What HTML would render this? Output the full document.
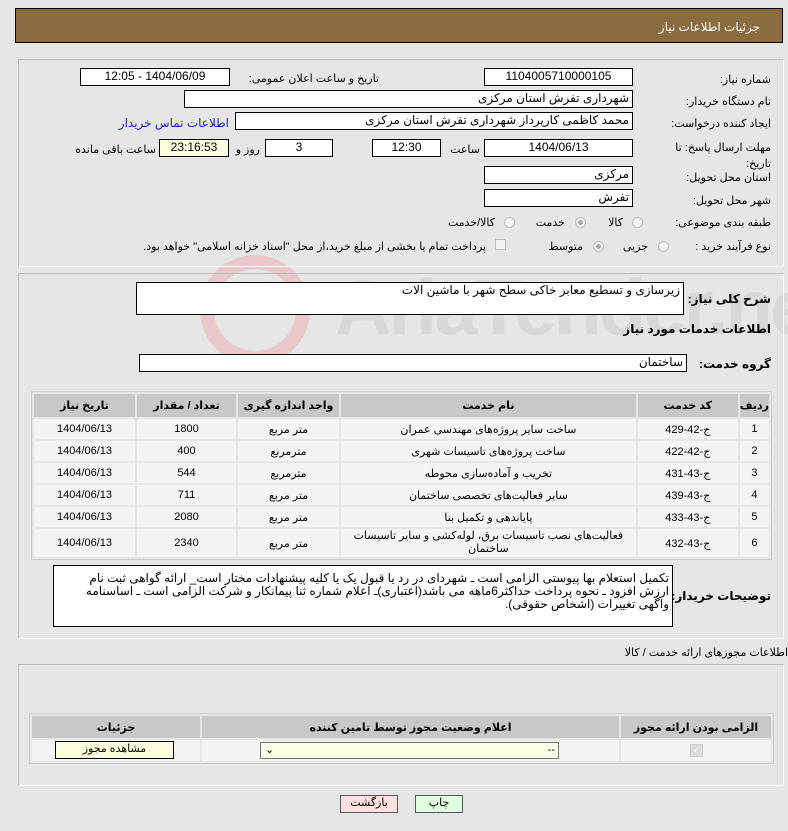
<!DOCTYPE html>
<html><head><meta charset="utf-8"><style>
body{margin:0;width:788px;height:831px;background:#e6e6e6;font-family:"Liberation Sans","DejaVu Sans",sans-serif;font-size:11px;color:#000;position:relative;overflow:hidden;direction:rtl}
.a{position:absolute;white-space:nowrap}
.box{position:absolute;background:#fff;border:1px solid #000;box-sizing:border-box;font-size:12px;line-height:15px;padding:0 3px;overflow:hidden}
.c{text-align:center}
.panel{position:absolute;border:1px solid #bbb;border-right-color:#fff;border-bottom-color:#fff;box-sizing:border-box}
.rad{position:absolute;width:11px;height:11px;border-radius:50%;border:1px solid #bbb;background:#f4f4f4;box-sizing:border-box}
.rad.on::after{content:"";position:absolute;left:2px;top:2px;width:5px;height:5px;border-radius:50%;background:#aaa}
table{border-collapse:separate;border-spacing:2px;position:absolute}
td,th{text-align:center;font-size:11px;padding:0}
th{background:#c8c8c8;font-weight:bold}
td{background:#f4f4f4}
.lb{font-size:12px;font-weight:bold}
</style></head><body>
<div class="a" style="left:15px;top:8px;width:768px;height:35px;background:#8b6b40;border:1px solid #000;box-sizing:border-box"></div>
<div class="a" style="right:28px;top:20px;color:#fff;font-size:12px">جزئیات اطلاعات نیاز</div>

<div class="a" style="left:0;top:250px;width:788px;height:120px;overflow:hidden">
<div class="a" style="left:335px;top:12px;font-size:78px;font-weight:bold;color:#d8d8d8;direction:ltr;letter-spacing:-3px;line-height:90px">AriaTender.neT</div>
<div class="a" style="left:200px;top:5px;width:110px;height:110px;border:14px solid #e8c8c8;border-radius:50%;box-sizing:border-box"></div>
</div>

<div class="panel" style="left:18px;top:59px;width:766px;height:208px"></div>
<div class="a" style="right:17px;top:73px">شماره نیاز:</div>
<div class="box c" style="left:484px;top:68px;width:149px;height:18px">1104005710000105</div>
<div class="a" style="right:409px;top:72px">تاریخ و ساعت اعلان عمومی:</div>
<div class="box c" style="left:80px;top:68px;width:150px;height:18px">1404/06/09 - 12:05</div>
<div class="a" style="right:17px;top:95px">نام دستگاه خریدار:</div>
<div class="box" style="left:184px;top:90px;width:449px;height:18px">شهرداری تفرش استان مرکزی</div>
<div class="a" style="right:17px;top:117px">ایجاد کننده درخواست:</div>
<div class="box" style="left:235px;top:112px;width:398px;height:18px">محمد کاظمی کارپرداز شهرداری تفرش استان مرکزی</div>
<div class="a" style="right:559px;top:116px;color:#2020d0;font-size:12px">اطلاعات تماس خریدار</div>
<div class="a" style="right:17px;top:140px;line-height:16px;white-space:normal;width:110px">مهلت ارسال پاسخ: تا تاریخ:</div>
<div class="box c" style="left:484px;top:139px;width:149px;height:18px">1404/06/13</div>
<div class="a" style="right:308px;top:143px">ساعت</div>
<div class="box c" style="left:372px;top:139px;width:69px;height:18px">12:30</div>
<div class="box c" style="left:265px;top:139px;width:68px;height:18px">3</div>
<div class="a" style="right:528px;top:143px">روز و</div>
<div class="box c" style="left:159px;top:139px;width:70px;height:18px;background:#ffffe0">23:16:53</div>
<div class="a" style="right:632px;top:143px">ساعت باقی مانده</div>
<div class="a" style="right:17px;top:171px">استان محل تحویل:</div>
<div class="box" style="left:484px;top:166px;width:149px;height:18px">مرکزی</div>
<div class="a" style="right:17px;top:194px">شهر محل تحویل:</div>
<div class="box" style="left:484px;top:189px;width:149px;height:18px">تفرش</div>
<div class="a" style="right:17px;top:216px">طبقه بندی موضوعی:</div>
<div class="rad" style="left:632px;top:217px"></div><div class="a" style="right:165px;top:216px">کالا</div>
<div class="rad on" style="left:575px;top:217px"></div><div class="a" style="right:223px;top:216px">خدمت</div>
<div class="rad" style="left:504px;top:217px"></div><div class="a" style="right:293px;top:216px">کالا/خدمت</div>
<div class="a" style="right:17px;top:240px">نوع فرآیند خرید :</div>
<div class="rad" style="left:658px;top:241px"></div><div class="a" style="right:140px;top:240px">جزیی</div>
<div class="rad on" style="left:593px;top:241px"></div><div class="a" style="right:205px;top:240px">متوسط</div>
<div class="a" style="left:495px;top:239px;width:11px;height:11px;border:1px solid #bbb;background:#f4f4f4;box-sizing:border-box"></div>
<div class="a" style="right:302px;top:240px">پرداخت تمام یا بخشی از مبلغ خرید،از محل "اسناد خزانه اسلامی" خواهد بود.</div>

<div class="panel" style="left:18px;top:273px;width:766px;height:366px"></div>
<div class="a lb" style="right:17px;top:292px">شرح کلی نیاز:</div>
<div class="box" style="left:136px;top:282px;width:548px;height:33px">زیرسازی و تسطیع معابر خاکی سطح شهر با ماشین الات</div>
<div class="a lb" style="right:17px;top:322px">اطلاعات خدمات مورد نیاز</div>
<div class="a lb" style="right:17px;top:357px">گروه خدمت:</div>
<div class="box" style="left:139px;top:354px;width:548px;height:18px">ساختمان</div>

<table style="left:31px;top:391px;width:741px;background:#e6e6e6;border:1px solid #ccc">
<tr style="height:23px"><th style="width:26px">ردیف</th><th style="width:100px">کد خدمت</th><th>نام خدمت</th><th style="width:101px">واحد اندازه گیری</th><th style="width:99px">تعداد / مقدار</th><th style="width:101px">تاریخ نیاز</th></tr>
<tr style="height:20px"><td>1</td><td>ج-42-429</td><td>ساخت سایر پروژه‌های مهندسی عمران</td><td>متر مربع</td><td>1800</td><td>1404/06/13</td></tr>
<tr style="height:20px"><td>2</td><td>ج-42-422</td><td>ساخت پروژه‌های تاسیسات شهری</td><td>مترمربع</td><td>400</td><td>1404/06/13</td></tr>
<tr style="height:20px"><td>3</td><td>ج-43-431</td><td>تخریب و آماده‌سازی محوطه</td><td>مترمربع</td><td>544</td><td>1404/06/13</td></tr>
<tr style="height:20px"><td>4</td><td>ج-43-439</td><td>سایر فعالیت‌های تخصصی ساختمان</td><td>متر مربع</td><td>711</td><td>1404/06/13</td></tr>
<tr style="height:20px"><td>5</td><td>ج-43-433</td><td>پایاندهی و تکمیل بنا</td><td>متر مربع</td><td>2080</td><td>1404/06/13</td></tr>
<tr style="height:28px"><td>6</td><td>ج-43-432</td><td style="line-height:13px">فعالیت‌های نصب تاسیسات برق، لوله‌کشی و سایر تاسیسات<br>ساختمان</td><td>متر مربع</td><td>2340</td><td>1404/06/13</td></tr>
</table>

<div class="a lb" style="right:17px;top:589px">توضیحات خریدار:</div>
<div class="box" style="left:53px;top:565px;width:620px;height:62px;white-space:normal;line-height:13px;padding-top:6px">تکمیل استعلام بها پیوستی الزامی است ـ شهردای در رد یا قبول یک یا کلیه پیشنهادات مختار است_ ارائه گواهی ثبت نام ارزش افزود ـ نحوه پرداخت حداکثر6ماهه می باشد(اعتباری)ـ اعلام شماره ثنا پیمانکار و شرکت الزامی است ـ اساسنامه واگهی تغییرات (اشخاص حقوقی).</div>

<div class="a" style="right:0px;top:646px;font-size:11px">اطلاعات مجوزهای ارائه خدمت / کالا</div>
<div class="panel" style="left:18px;top:664px;width:766px;height:122px"></div>
<table style="left:29px;top:713px;width:745px;background:#e6e6e6;border:1px solid #ccc">
<tr style="height:22px"><th style="width:150px">الزامی بودن ارائه مجوز</th><th>اعلام وضعیت مجوز توسط تامین کننده</th><th style="width:168px">جزئیات</th></tr>
<tr style="height:21px"><td><span style="display:inline-block;width:11px;height:11px;background:#ddd;border:1px solid #ccc;color:#fff;font-size:9px;line-height:11px">✓</span></td><td></td><td></td></tr>
</table>
<div class="box" style="left:260px;top:742px;width:299px;height:17px;background:#ffffe8;border-color:#777;font-size:11px">--<span style="position:absolute;left:4px;top:0">⌄</span></div>
<div class="box c" style="left:55px;top:741px;width:119px;height:18px;background:#ffffe0;font-size:11px">مشاهده مجوز</div>

<div class="box c" style="left:340px;top:795px;width:58px;height:18px;background:#ffe0e0;border-color:#555;font-size:11px">بازگشت</div>
<div class="box c" style="left:415px;top:795px;width:48px;height:18px;background:#e0ffe0;border-color:#555;font-size:11px">چاپ</div>
</body></html>
